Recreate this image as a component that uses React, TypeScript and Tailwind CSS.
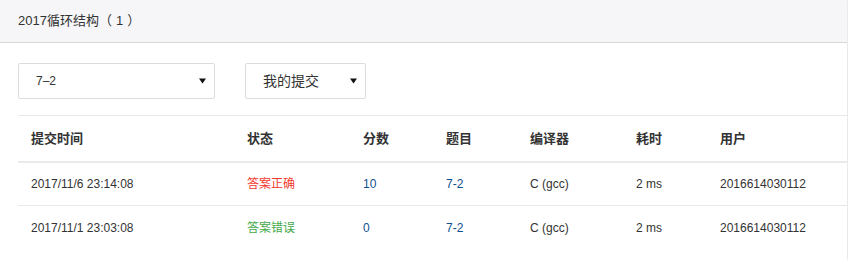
import React from 'react';

interface Submission {
    time: string;
    status: string;
    ok: boolean;
    score: string;
    problem: string;
    compiler: string;
    cost: string;
    user: string;
}

const rows: Submission[] = [
    { time: '2017/11/6 23:14:08', status: '答案正确', ok: true, score: '10', problem: '7-2', compiler: 'C (gcc)', cost: '2 ms', user: '2016614030112' },
    { time: '2017/11/1 23:03:08', status: '答案错误', ok: false, score: '0', problem: '7-2', compiler: 'C (gcc)', cost: '2 ms', user: '2016614030112' },
];

const cols = 'grid grid-cols-[216px_116px_83px_84px_106px_84px_1fr]';

function Caret() {
    return (
        <svg width="7" height="6" viewBox="0 0 7 6" className="shrink-0">
            <path d="M0 0.5h7L3.5 5.5z" fill="#111" />
        </svg>
    );
}

function FakeSelect({ label, width, textSize }: { label: string; width: string; textSize: string }) {
    return (
        <div className={`${width} h-[36px] flex items-center justify-between pl-[17px] pr-[8px] border border-[#dcdcdc] rounded-[2px] bg-white ${textSize} text-[#333]`}>
            <span>{label}</span>
            <Caret />
        </div>
    );
}

export default function App() {
    return (
        <div className="w-[848px] h-[260px] bg-white overflow-hidden font-['Liberation_Sans','Noto_Sans_CJK_SC',sans-serif]">
            <div className="w-[847px] h-full shadow-[1px_0_2px_rgba(0,0,0,0.12)]">
                {/* Title bar */}
                <div className="h-[43px] bg-[#f6f6f8] border-b border-[#d8d8d8] px-[18px] flex items-center text-[13px] text-[#333]">
                    2017循环结构（<span className="px-[4px]">1</span>）
                </div>

                <div className="pl-[18px] pt-[20px]">
                    {/* Filters */}
                    <div className="flex gap-[30px]">
                        <FakeSelect label="7–2" width="w-[197px]" textSize="text-[12px]" />
                        <FakeSelect label="我的提交" width="w-[121px]" textSize="text-[14px]" />
                    </div>

                    {/* Submissions table */}
                    <div className="mt-[16px] border-t border-[#e8e8e8] text-[12px] text-[#333]">
                        <div className={`${cols} h-[47px] items-center border-b-2 border-[#eaeaea] font-bold text-[13px]`}>
                            {['提交时间', '状态', '分数', '题目', '编译器', '耗时', '用户'].map((h) => (
                                <div key={h} className="pl-[13px]">{h}</div>
                            ))}
                        </div>
                        {rows.map((r, i) => (
                            <div key={i} className={`${cols} h-[43px] items-center ${i === 0 ? 'border-b border-[#e8e8e8]' : ''}`}>
                                <div className="pl-[13px]">{r.time}</div>
                                <div className={`pl-[13px] ${r.ok ? 'text-[#f2382c]' : 'text-[#46a94a]'}`}>{r.status}</div>
                                <div className="pl-[13px] text-[#0e4f8e]">{r.score}</div>
                                <div className="pl-[13px] text-[#0e4f8e]">{r.problem}</div>
                                <div className="pl-[13px]">{r.compiler}</div>
                                <div className="pl-[13px]">{r.cost}</div>
                                <div className="pl-[13px]">{r.user}</div>
                            </div>
                        ))}
                    </div>
                </div>
            </div>
        </div>
    );
}
